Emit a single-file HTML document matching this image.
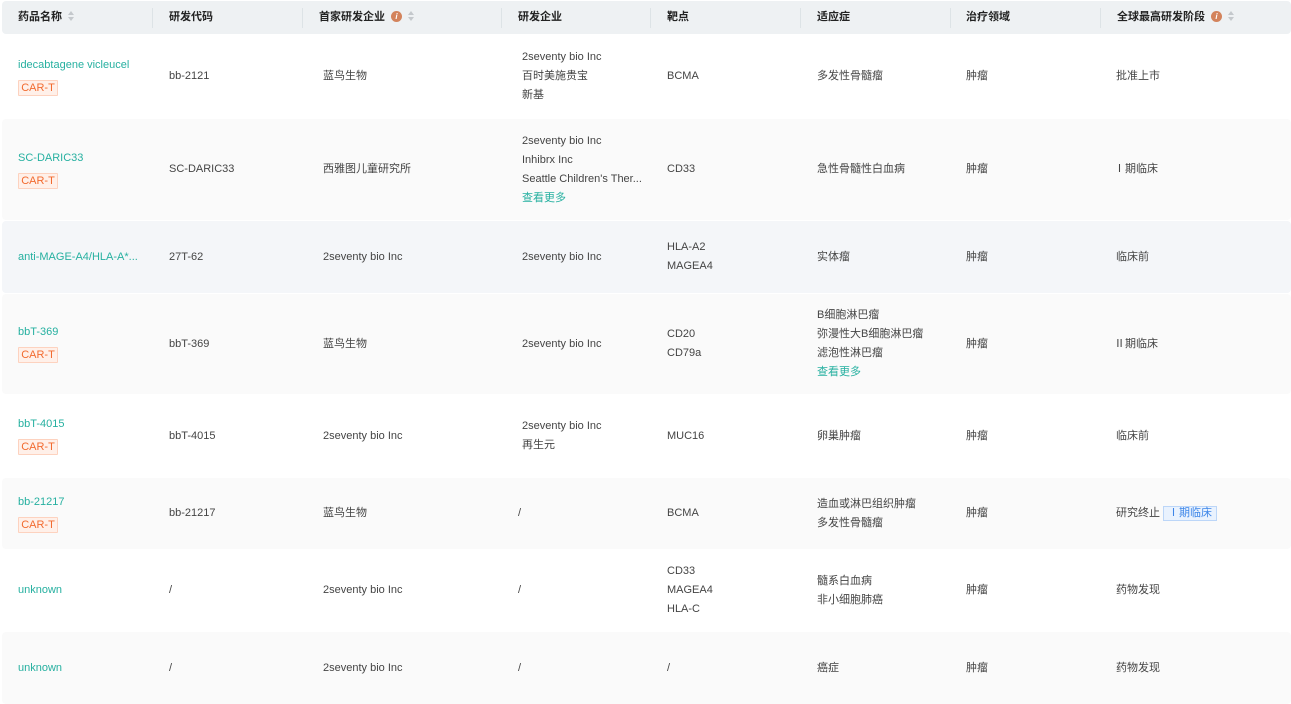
<!DOCTYPE html>
<html><head><meta charset="utf-8"><style>
body{margin:0;width:1291px;height:695px;overflow:hidden;background:#fff;font-family:"Liberation Sans","Noto Sans CJK SC",sans-serif;font-size:11px;color:#444;position:relative}
.hdr{position:absolute;left:2px;top:1px;width:1289px;height:33px;background:#eef1f3;border-radius:4px}
.h{position:absolute;top:0;height:33px;line-height:33px;font-weight:bold;color:#222;font-size:11px}
.sep{position:absolute;top:7px;width:1px;height:20px;background:#dde3e6}
.sort{display:inline-block;vertical-align:middle;margin-left:6px;width:7px;height:11px;position:relative;top:-1px}
.sort:before{content:"";position:absolute;left:0;top:0;border:3.5px solid transparent;border-bottom:4px solid #c4c8cc;border-top:0}
.sort:after{content:"";position:absolute;left:0;top:6px;border:3.5px solid transparent;border-top:4px solid #c4c8cc;border-bottom:0}
.info{display:inline-block;vertical-align:middle;width:11px;height:11px;border-radius:50%;background:#d3835c;color:#fff;font-size:8px;line-height:11px;text-align:center;font-style:italic;font-weight:bold;margin-left:6px;position:relative;top:-1px}
.row{position:absolute;left:2px;width:1289px;border-radius:4px}
.c{position:absolute;top:0;bottom:0;display:flex;flex-direction:column;justify-content:center;line-height:19px;white-space:nowrap}
.t{color:#26b0a0}
.tag{display:inline-block;margin-top:5px;height:14px;line-height:14px;width:38px;text-align:center;border:1px solid #fdd2bf;background:#fff0e9;color:#f26a2e;font-size:11px;border-radius:1px}
.btag{display:inline-block;height:13px;line-height:13px;padding:0 4px;border:1px solid #bcd6f8;background:#e9f2fe;color:#3d86e8;margin-left:3px}
</style></head><body>
<div class="hdr">
<div class="h" style="left:16px">药品名称<span class="sort"></span></div>
<div class="sep" style="left:150px"></div>
<div class="h" style="left:167px">研发代码</div>
<div class="sep" style="left:300px"></div>
<div class="h" style="left:317px">首家研发企业<span class="info">i</span><span class="sort"></span></div>
<div class="sep" style="left:499px"></div>
<div class="h" style="left:516px">研发企业</div>
<div class="sep" style="left:648px"></div>
<div class="h" style="left:665px">靶点</div>
<div class="sep" style="left:798px"></div>
<div class="h" style="left:815px">适应症</div>
<div class="sep" style="left:948px"></div>
<div class="h" style="left:964px">治疗领域</div>
<div class="sep" style="left:1098px"></div>
<div class="h" style="left:1115px">全球最高研发阶段<span class="info">i</span><span class="sort"></span></div>
</div>

<div class="row" style="top:35px;height:83px;background:#fff">
<div class="c" style="left:16px"><span class="t">idecabtagene vicleucel</span><span><span class="tag">CAR-T</span></span></div>
<div class="c" style="left:167px">bb-2121</div><div class="c" style="left:321px">蓝鸟生物</div>
<div class="c" style="left:520px"><span>2seventy bio Inc</span><span>百时美施贵宝</span><span>新基</span></div>
<div class="c" style="left:665px">BCMA</div><div class="c" style="left:815px">多发性骨髓瘤</div>
<div class="c" style="left:964px">肿瘤</div><div class="c" style="left:1114px">批准上市</div></div>

<div class="row" style="top:119px;height:101px;background:#fafafa">
<div class="c" style="left:16px"><span class="t">SC-DARIC33</span><span><span class="tag">CAR-T</span></span></div>
<div class="c" style="left:167px">SC-DARIC33</div><div class="c" style="left:321px">西雅图儿童研究所</div>
<div class="c" style="left:520px"><span>2seventy bio Inc</span><span>Inhibrx Inc</span><span>Seattle Children's Ther...</span><span class="t">查看更多</span></div>
<div class="c" style="left:665px">CD33</div><div class="c" style="left:815px">急性骨髓性白血病</div>
<div class="c" style="left:964px">肿瘤</div><div class="c" style="left:1112px">Ⅰ期临床</div></div>

<div class="row" style="top:221px;height:72px;background:#f4f6f9">
<div class="c" style="left:16px"><span class="t">anti-MAGE-A4/HLA-A*...</span></div>
<div class="c" style="left:167px">27T-62</div><div class="c" style="left:321px">2seventy bio Inc</div>
<div class="c" style="left:520px">2seventy bio Inc</div>
<div class="c" style="left:665px"><span>HLA-A2</span><span>MAGEA4</span></div><div class="c" style="left:815px">实体瘤</div>
<div class="c" style="left:964px">肿瘤</div><div class="c" style="left:1114px">临床前</div></div>

<div class="row" style="top:294px;height:100px;background:#fafafa">
<div class="c" style="left:16px"><span class="t">bbT-369</span><span><span class="tag">CAR-T</span></span></div>
<div class="c" style="left:167px">bbT-369</div><div class="c" style="left:321px">蓝鸟生物</div>
<div class="c" style="left:520px">2seventy bio Inc</div>
<div class="c" style="left:665px"><span>CD20</span><span>CD79a</span></div>
<div class="c" style="left:815px"><span>B细胞淋巴瘤</span><span>弥漫性大B细胞淋巴瘤</span><span>滤泡性淋巴瘤</span><span class="t">查看更多</span></div>
<div class="c" style="left:964px">肿瘤</div><div class="c" style="left:1112px">Ⅱ期临床</div></div>

<div class="row" style="top:395px;height:82px;background:#fff">
<div class="c" style="left:16px"><span class="t">bbT-4015</span><span><span class="tag">CAR-T</span></span></div>
<div class="c" style="left:167px">bbT-4015</div><div class="c" style="left:321px">2seventy bio Inc</div>
<div class="c" style="left:520px"><span>2seventy bio Inc</span><span>再生元</span></div>
<div class="c" style="left:665px">MUC16</div><div class="c" style="left:815px">卵巢肿瘤</div>
<div class="c" style="left:964px">肿瘤</div><div class="c" style="left:1114px">临床前</div></div>

<div class="row" style="top:478px;height:71px;background:#fafafa">
<div class="c" style="left:16px"><span class="t">bb-21217</span><span><span class="tag">CAR-T</span></span></div>
<div class="c" style="left:167px">bb-21217</div><div class="c" style="left:321px">蓝鸟生物</div>
<div class="c" style="left:516px">/</div>
<div class="c" style="left:665px">BCMA</div><div class="c" style="left:815px"><span>造血或淋巴组织肿瘤</span><span>多发性骨髓瘤</span></div>
<div class="c" style="left:964px">肿瘤</div><div class="c" style="left:1114px"><span>研究终止<span class="btag">Ⅰ期临床</span></span></div></div>

<div class="row" style="top:550px;height:81px;background:#fff">
<div class="c" style="left:16px"><span class="t">unknown</span></div>
<div class="c" style="left:167px">/</div><div class="c" style="left:321px">2seventy bio Inc</div>
<div class="c" style="left:516px">/</div>
<div class="c" style="left:665px"><span>CD33</span><span>MAGEA4</span><span>HLA-C</span></div><div class="c" style="left:815px"><span>髓系白血病</span><span>非小细胞肺癌</span></div>
<div class="c" style="left:964px">肿瘤</div><div class="c" style="left:1114px">药物发现</div></div>

<div class="row" style="top:632px;height:72px;background:#fafafa">
<div class="c" style="left:16px"><span class="t">unknown</span></div>
<div class="c" style="left:167px">/</div><div class="c" style="left:321px">2seventy bio Inc</div>
<div class="c" style="left:516px">/</div>
<div class="c" style="left:665px">/</div><div class="c" style="left:815px">癌症</div>
<div class="c" style="left:964px">肿瘤</div><div class="c" style="left:1114px">药物发现</div></div>
</body></html>
